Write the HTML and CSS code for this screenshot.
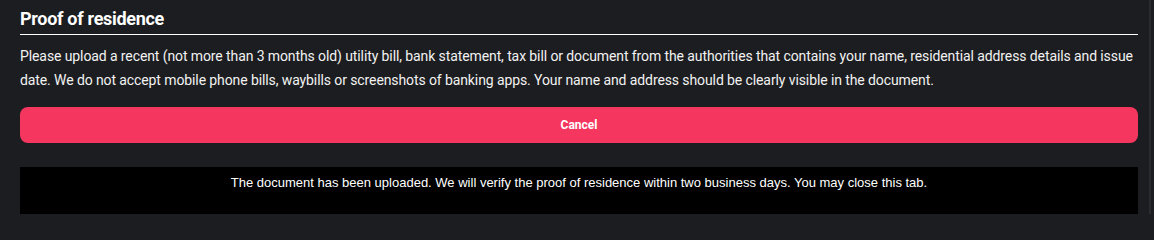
FILE: index.html
```html
<!DOCTYPE html>
<html>
<head>
<meta charset="utf-8">
<link rel="stylesheet" href="styles.css">
</head>
<body>
<div class="page">
  <div class="content">
    <h2 class="title">Proof of residence</h2>
    <p class="desc">Please upload a recent (not more than 3 months old) utility bill, bank statement, tax bill or document from the authorities that contains your name, residential address details and issue date. We do not accept mobile phone bills, waybills or screenshots of banking apps. Your name and address should be clearly visible in the document.</p>
    <button class="cancel">Cancel</button>
    <div class="frame">
      <p class="notice">The document has been uploaded. We will verify the proof of residence within two business days. You may close this tab.</p>
    </div>
  </div>
  <div class="scroll"></div>
</div>
</body>
</html>
```
FILE: styles.css
```css
html, body {
  margin: 0;
  padding: 0;
  background: #1c1d20;
  height: 100%;
  overflow: hidden;
}
.page {
  display: flex;
  height: 214px;
  overflow: hidden;
}
.content {
  width: 1118px;
  padding-left: 20px;
  color: #ffffff;
  font-family: Roboto, "Liberation Sans", sans-serif;
}
.title {
  margin: 0;
  padding-top: 8px;
  padding-bottom: 4px;
  font-size: 18px;
  font-weight: 700;
  line-height: 22px;
  letter-spacing: -0.3px;
  border-bottom: 1px solid #ffffff;
}
.desc {
  margin: 9px 0 0;
  font-size: 14px;
  line-height: 24px;
  letter-spacing: -0.1px;
  color: #f2f2f2;
}
.cancel {
  display: block;
  width: 100%;
  height: 36px;
  margin-top: 15px;
  border: none;
  border-radius: 8px;
  background: #f5365f;
  color: #ffffff;
  font-family: Roboto, "Liberation Sans", sans-serif;
  font-weight: 700;
  font-size: 12px;
}
.frame {
  margin-top: 24px;
  background: #000000;
  height: 80px;
  padding-top: 8px;
}
.notice {
  margin: 0;
  text-align: center;
  font-family: "Liberation Sans", Arial, sans-serif;
  font-size: 13px;
  line-height: 16px;
  color: #ffffff;
}
.scroll {
  width: 2px;
  margin-left: 11px;
  background: #2a2b2e;
}
```
